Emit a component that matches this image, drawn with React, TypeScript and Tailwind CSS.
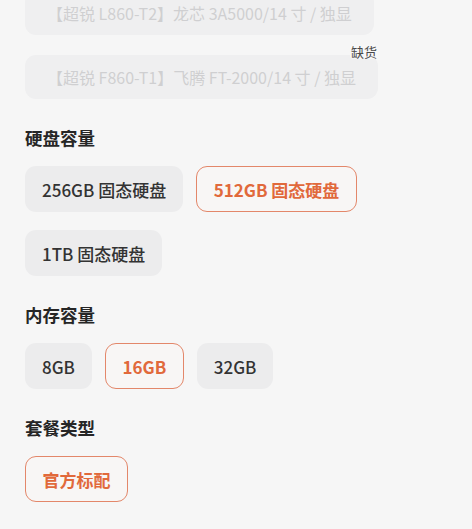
import clsx from 'clsx'

type Opt = { label: string; selected?: boolean }

const DISK: Opt[] = [
  { label: '256GB 固态硬盘' },
  { label: '512GB 固态硬盘', selected: true },
  { label: '1TB 固态硬盘' },
]

const MEM: Opt[] = [{ label: '8GB' }, { label: '16GB', selected: true }, { label: '32GB' }]

const PKG: Opt[] = [{ label: '官方标配', selected: true }]

function Chip({ label, selected }: Opt) {
  return (
    <button
      type="button"
      className={clsx(
        'h-[46px] rounded-[11px] text-[17px] leading-none whitespace-nowrap',
        selected
          ? 'px-[16.5px] border-[1.5px] border-[#e3876a] text-[#e1693b] font-bold bg-[#f8f6f5]'
          : 'px-[17px] bg-[#ececed] text-[#333] font-medium'
      )}
    >
      {label}
    </button>
  )
}

function Group({ title, options }: { title: string; options: Opt[] }) {
  return (
    <section className="mt-[27px]">
      <h3 className="text-[17.5px] leading-6 font-bold text-[#262626]">{title}</h3>
      <div className="mt-[16px] flex flex-wrap gap-x-[13px] gap-y-[18px]">
        {options.map(o => (
          <Chip key={o.label} {...o} />
        ))}
      </div>
    </section>
  )
}

export default function App() {
  return (
    <div
      className="min-h-[529px] bg-[#f6f6f6] pl-[25px] pr-4 overflow-hidden"
      style={{ fontFamily: '"Noto Sans CJK SC", "Noto Sans", sans-serif' }}
    >
      <div className="flex flex-col items-start gap-[20px] -mt-[9px]">
        <div className="h-[44px] flex items-center pl-[22px] pr-[22px] rounded-[11px] bg-[#efeff0] text-[16px] text-[#cfcfd1]">
          【超锐 L860-T2】龙芯 3A5000/14 寸 / 独显
        </div>
        <div className="relative">
          <span className="absolute right-0 -top-[10px] px-[1px] text-[13px] leading-[14px] text-[#4a4a4a] bg-[#f7f7f7] rounded-sm">
            缺货
          </span>
          <div className="h-[44px] flex items-center pl-[22px] pr-[22px] rounded-[11px] bg-[#efeff0] text-[16px] text-[#cfcfd1]">
            【超锐 F860-T1】飞腾 FT-2000/14 寸 / 独显
          </div>
        </div>
      </div>
      <Group title="硬盘容量" options={DISK} />
      <Group title="内存容量" options={MEM} />
      <Group title="套餐类型" options={PKG} />
    </div>
  )
}
